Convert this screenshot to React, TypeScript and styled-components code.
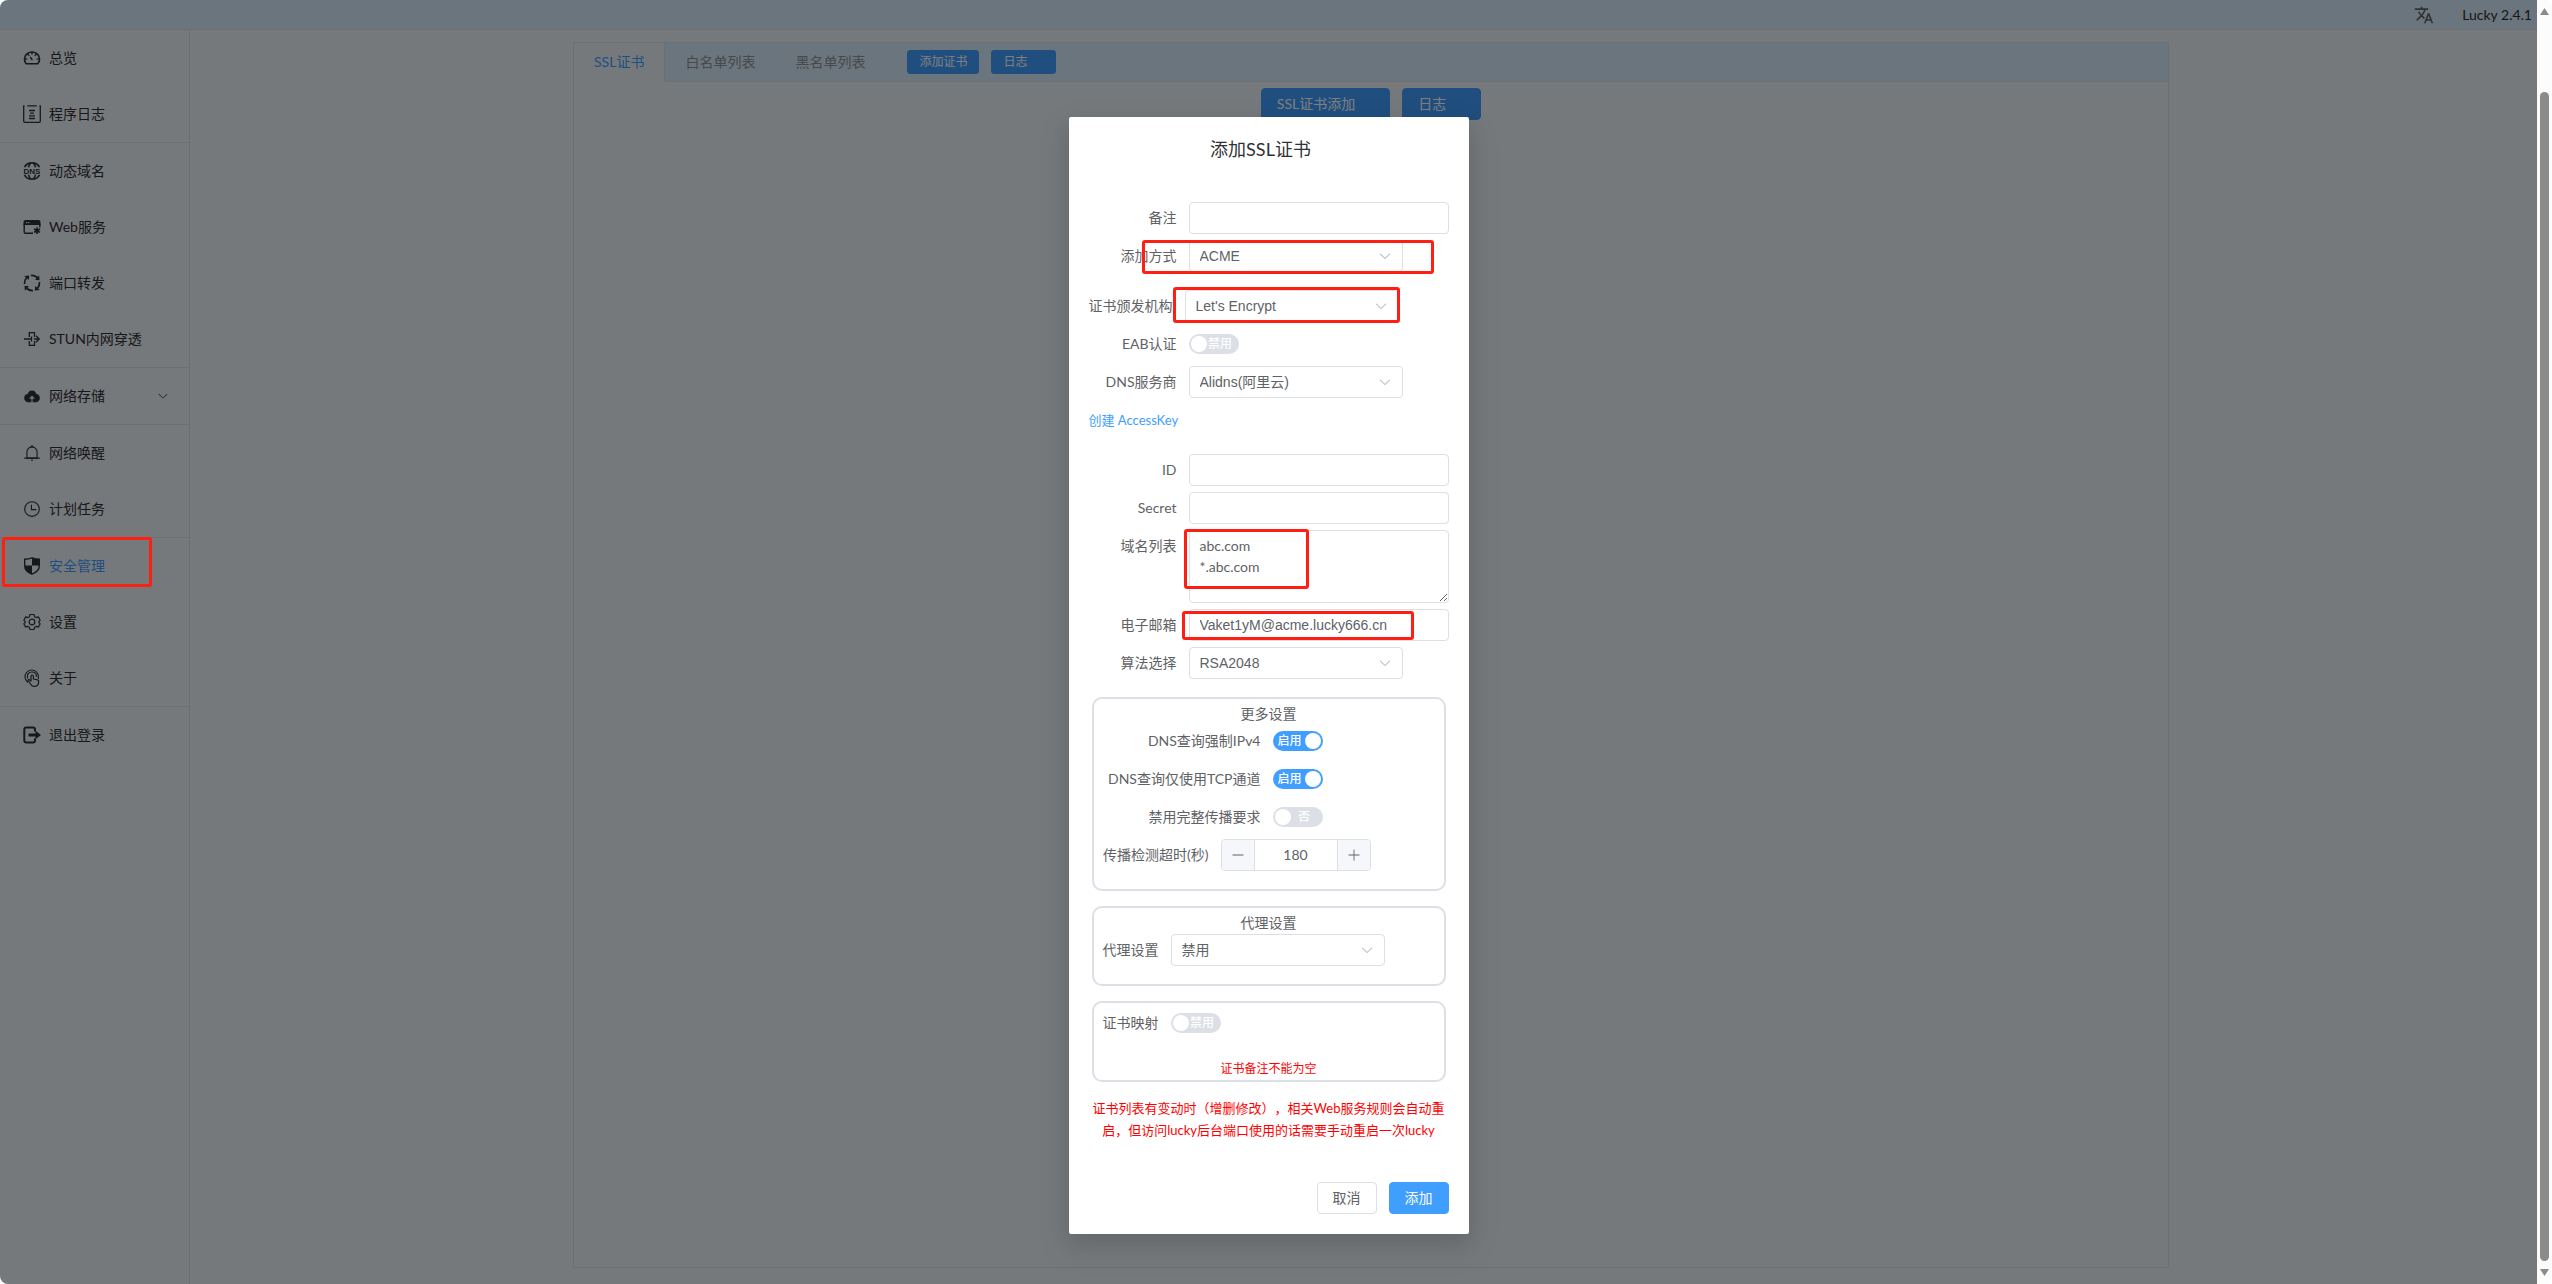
import React, { ReactNode, useState } from "react";
import styled, { createGlobalStyle, css } from "styled-components";
import { MdTranslate } from "react-icons/md";

const uiFont = `Lato, "Noto Sans CJK SC", sans-serif`;
const fieldFont = `"Liberation Sans", "Noto Sans CJK SC", sans-serif`;

const GlobalStyle = createGlobalStyle`
  *, *::before, *::after { box-sizing: border-box; }
  html, body { margin: 0; background: #fff; }
  body {
    font-family: ${uiFont};
    font-size: 14px;
    line-height: 20px;
    color: #303133;
    overflow: hidden;
    text-spacing-trim: space-all;
  }
  button, input, select, textarea { font: inherit; color: inherit; margin: 0; }
`;

/* ---------- window frame ---------- */

const Frame = styled.div`
  display: flex;
  height: 100vh;
  border-radius: 8px;
  overflow: hidden;
  background: #fcfcfc;
`;

const Viewport = styled.div`
  position: relative;
  flex: 1;
  min-width: 0;
  display: flex;
  flex-direction: column;
  background: #ecf2f9;
`;

const ScrollRail = styled.div`
  width: 15px;
  display: flex;
  flex-direction: column;
  align-items: center;
  padding: 8px 0;
`;

const ScrollThumb = styled.div`
  width: 9px;
  flex: 1;
  margin: 77px 0 8px;
  border-radius: 5px;
  background: #8b8b8b;
`;

const ScrollArrow = styled.svg`
  display: block;
  width: 9px;
  height: 7px;
  fill: #8b8b8b;
`;

/* ---------- page chrome ---------- */

const TopBar = styled.header`
  height: 30px;
  display: flex;
  align-items: center;
  justify-content: flex-end;
  gap: 28px;
  padding-right: 5px;
  border-bottom: 1px solid #dcdfe6;
  background: #d6eafa;
`;

const LanguageButton = styled.button`
  display: flex;
  padding: 0;
  border: 0;
  background: none;
  color: #606266;
  font-size: 20px;
`;

const Body = styled.div`
  flex: 1;
  display: flex;
  min-height: 0;
`;

const Sidebar = styled.nav`
  width: 190px;
  border-right: 1px solid #dcdfe6;
`;

const MenuGroup = styled.ul`
  list-style: none;
  margin: 0;
  padding: 0;
  & + & {
    border-top: 1px solid #dcdfe6;
  }
`;

const MenuLink = styled.a<{ $active?: boolean }>`
  display: flex;
  align-items: center;
  gap: 5px;
  height: 56px;
  padding: 0 20px;
  color: ${(p) => (p.$active ? "#409eff" : "#303133")};
  text-decoration: none;
`;

const MenuIcon = styled.span`
  width: 24px;
  display: flex;
  justify-content: center;
  color: #303133;
`;

const MenuText = styled.span`
  flex: 1;
`;

const Glyph = styled.svg<{ $size: number }>`
  display: block;
  flex: none;
  width: ${(p) => p.$size}px;
  height: ${(p) => p.$size}px;
`;

const Main = styled.main`
  flex: 1;
  display: flex;
  padding: 12px 368px 16px 383px;
`;

const Card = styled.section`
  flex: 1;
  border: 1px solid #dcdfe6;
`;

const TabBar = styled.div`
  display: flex;
  align-items: center;
  height: 39px;
  border-bottom: 1px solid #dcdfe6;
  background: #d6eafa;
`;

const Tab = styled.button<{ $active?: boolean }>`
  height: 39px;
  padding: 0 20px;
  border: 0;
  background: none;
  color: #909399;
  ${(p) =>
    p.$active &&
    css`
      color: #409eff;
      background: #ecf2f9;
      border-right: 1px solid #dcdfe6;
    `}
`;

const TabActions = styled.div`
  display: flex;
  gap: 12px;
  margin-left: 22px;
`;

const CardActions = styled.div`
  display: flex;
  justify-content: center;
  gap: 12px;
  padding-top: 6px;
`;

const Button = styled.button<{ $small?: boolean; $plain?: boolean; $spare?: boolean }>`
  height: ${(p) => (p.$small ? 24 : 32)}px;
  padding: 0 ${(p) => (p.$small ? 11 : 15)}px;
  padding-right: ${(p) => (p.$spare ? (p.$small ? 28 : 34) : p.$small ? 11 : 15)}px;
  border: 1px solid ${(p) => (p.$plain ? "#dcdfe6" : "#409eff")};
  border-radius: ${(p) => (p.$small ? 3 : 4)}px;
  background: ${(p) => (p.$plain ? "#fff" : "#409eff")};
  color: ${(p) => (p.$plain ? "#606266" : "#fff")};
  font-size: ${(p) => (p.$small ? 12 : 14)}px;
  line-height: 1;
`;

/* ---------- dialog ---------- */

const Overlay = styled.div`
  position: absolute;
  inset: 0;
  display: flex;
  justify-content: center;
  align-items: flex-start;
  padding-top: 117px;
  background: rgba(0, 0, 0, 0.5);
`;

const Dialog = styled.form`
  width: 400px;
  border-radius: 2px;
  background: #fff;
  color: #606266;
  box-shadow: 0 12px 32px 4px rgba(0, 0, 0, 0.08), 0 8px 20px rgba(0, 0, 0, 0.08);
`;

const DialogTitle = styled.h2`
  margin: 0 16px 0 0;
  padding: 20px 20px 10px;
  font-size: 18px;
  font-weight: 400;
  line-height: 25px;
  text-align: center;
  color: #303133;
`;

const DialogBody = styled.div`
  display: flex;
  flex-direction: column;
  padding: 30px 20px 31px;
`;

const DialogFooter = styled.div`
  display: flex;
  justify-content: flex-end;
  gap: 12px;
  padding: 10px 20px 20px;
`;

const Row = styled.div<{ $gap?: number }>`
  position: relative;
  display: flex;
  align-items: center;
  gap: 12px;
  min-height: 32px;
  margin-bottom: ${(p) => p.$gap ?? 6}px;
`;

const Label = styled.label<{ $width: number; $top?: boolean }>`
  flex: none;
  width: ${(p) => p.$width}px;
  line-height: 32px;
  text-align: right;
  white-space: nowrap;
  ${(p) => p.$top && "align-self: flex-start;"}
`;

const fieldBox = css`
  border: 1px solid #dcdfe6;
  border-radius: 4px;
  background: #fff;
  outline: none;
`;

const TextInput = styled.input`
  ${fieldBox}
  flex: 1;
  min-width: 0;
  height: 32px;
  padding: 0 10px;
  font-family: ${fieldFont};
`;

const TextArea = styled.textarea`
  ${fieldBox}
  flex: 1;
  min-width: 0;
  height: 73px;
  padding: 4px 10px;
  line-height: 21px;
  resize: vertical;
`;

const SelectBox = styled.span`
  position: relative;
  flex: none;
  width: 214px;
  svg {
    position: absolute;
    top: 9px;
    right: 11px;
    color: #a8abb2;
    pointer-events: none;
  }
`;

const NativeSelect = styled.select`
  ${fieldBox}
  display: block;
  width: 100%;
  height: 32px;
  padding: 0 30px 0 10px;
  appearance: none;
  font-family: ${fieldFont};
`;

const HelpLink = styled.a`
  width: 88px;
  font-size: 13px;
  text-align: right;
  white-space: nowrap;
  color: #409eff;
  text-decoration: none;
`;

const SwitchTrack = styled.span<{ $on: boolean }>`
  position: relative;
  display: flex;
  flex-direction: ${(p) => (p.$on ? "row" : "row-reverse")};
  align-items: center;
  width: 50px;
  height: 20px;
  padding: 0 2px;
  border-radius: 10px;
  background: ${(p) => (p.$on ? "#409eff" : "#dcdfe6")};
`;

const SwitchInput = styled.input`
  position: absolute;
  inset: 0;
  width: 100%;
  height: 100%;
  opacity: 0;
`;

const SwitchText = styled.span<{ $on: boolean }>`
  flex: 1;
  padding-right: ${(p) => (p.$on ? 0 : 3)}px;
  font-size: 12px;
  font-weight: 500;
  line-height: 20px;
  text-align: center;
  color: #fff;
`;

const SwitchKnob = styled.span`
  width: 16px;
  height: 16px;
  border-radius: 50%;
  background: #fff;
`;

const Panel = styled.fieldset`
  min-width: 0;
  margin: 0 3px 15px;
  padding: 4px 8px 0;
  border: 2px solid #dcdfe6;
  border-radius: 10px;
`;

const PanelTitle = styled.div`
  line-height: 22px;
  text-align: center;
`;

const Warning = styled.p`
  margin: 0;
  font-size: 12px;
  line-height: 23px;
  text-align: center;
  color: #f00;
`;

const Hint = styled.p`
  margin: 0 3px;
  font-size: 13px;
  line-height: 22px;
  text-align: center;
  color: #f00;
`;

const Stepper = styled.div`
  ${fieldBox}
  display: flex;
  width: 150px;
  height: 32px;
  overflow: hidden;
`;

const StepButton = styled.button`
  display: flex;
  align-items: center;
  justify-content: center;
  width: 32px;
  padding: 0;
  border: 0;
  background: #f5f7fa;
  color: #606266;
`;

const StepValue = styled.input`
  flex: 1;
  min-width: 0;
  padding: 0;
  border: solid #dcdfe6;
  border-width: 0 1px;
  text-align: center;
  outline: none;
`;

/* red frame laid over the item it points out */
const Mark = styled.span<{ $x: number; $y: number; $w: number; $h: number }>`
  position: absolute;
  left: ${(p) => p.$x}px;
  top: ${(p) => p.$y}px;
  width: ${(p) => p.$w}px;
  height: ${(p) => p.$h}px;
  border: 3px solid #ff1f12;
  border-radius: 3px;
  pointer-events: none;
`;

const MarkLayer = styled.div`
  position: absolute;
  inset: 0;
  pointer-events: none;
`;

/* ---------- icons ---------- */

const stroke = { fill: "none", stroke: "currentColor", strokeWidth: 1.4 } as const;

const small = (children: ReactNode) => (
  <Glyph $size={18} viewBox="0 0 18 18" aria-hidden="true">
    {children}
  </Glyph>
);

const element = (paths: string[], size = 18) => (
  <Glyph $size={size} viewBox="0 0 1024 1024" fill="currentColor" aria-hidden="true">
    {paths.map((d) => (
      <path key={d} d={d} />
    ))}
  </Glyph>
);

const chevron = (size: number) =>
  element(
    [
      "M831.872 340.864 512 652.672 192.128 340.864a30.592 30.592 0 0 0-42.752 0 29.12 29.12 0 0 0 0 41.6L489.664 714.24a32 32 0 0 0 44.672 0l340.288-331.712a29.12 29.12 0 0 0 0-41.728 30.592 30.592 0 0 0-42.752 0z",
    ],
    size
  );

const icons = {
  gauge: small(
    <g {...stroke}>
      <path d="M3.2 14.8C.8 12.2 1 8.2 3.2 5.6 6.1 2.100 11.900 2.100 14.800 5.600 17 8.200 17.200 12.200 14.800 14.800Z" strokeWidth={1.6} />
      <path d="M9 3.100v2.500M4.600 5.100l1.600 1.600M13.400 5.100l-1.600 1.600M1.800 10.100h2.600M13.600 10.100h2.600M9.400 11.100 7.200 8" />
    </g>
  ),
  log: small(
    <path
      {...stroke}
      strokeWidth={1.3}
      d="M1.600.9H.7v15.200q0 1.200 1.200 1.200h14.200q1.200 0 1.200-1.200V.9h-.9M4.300.8h9.400M6 5.500h6M7 8.200h4M6 10.800h6M6 13.500h6"
    />
  ),
  dns: small(
    <>
      <path {...stroke} strokeWidth={1.7} d="M1.500 5.200C4.300-.6 13.700-.6 16.500 5.200M1.500 12.800C4.300 18.600 13.700 18.600 16.500 12.800" />
      <path {...stroke} strokeWidth={1.5} d="M5.500 5.300Q6 3 7.500 1.300M12.500 5.300Q12 3 10.500 1.300M5.500 12.700Q6 15 7.500 16.700M12.500 12.700Q12 15 10.500 16.700" />
      <text x="9" y="11.500" textAnchor="middle" fontSize="8" fontWeight="700" fontFamily="Liberation Sans, sans-serif" fill="currentColor">
        DNS
      </text>
    </>
  ),
  web: small(
    <>
      <path fill="currentColor" fillRule="evenodd" d="M2.500 2h13q2 0 2 2v3H.5V4q0-2 2-2ZM3 4v1.200h1.200V4ZM5.200 4v1.200h1.200V4Z" />
      <path {...stroke} d="M1.200 6v8q0 1.300 1.300 1.300H10M16.800 6v3.500" />
      <path {...stroke} strokeWidth={1.6} d="M14 9.300v6.800M11 11l6 3.400M17 11l-6 3.400" />
      <circle cx="14" cy="12.700" r="2" fill="currentColor" />
    </>
  ),
  cycle: small(
    <>
      <path {...stroke} strokeWidth={1.7} d="M1.500 10Q1.200 6.500 3.500 3.800M8 1.500Q11.500 1.200 14.200 3.500M16.500 8Q16.800 11.500 14.500 14.200M10 16.500Q6.500 16.800 3.800 14.500" />
      <path fill="currentColor" d="M1.200 1.900 6.200 1.500 5.800 6ZM16.100 1.200l.4 5-4.500-.4ZM16.800 16.100l-5 .4.400-4.500ZM1.900 16.800l-.4-5 4.500.4Z" />
    </>
  ),
  stun: small(
    <path {...stroke} strokeWidth={1.3} d="M1 9h7M6.300 7V2.700h5.200V7M6.300 11v4.300h5.200V11M8.500 6.500v5M11 9h5M13 5.800 16.200 9 13 12.200" />
  ),
  cloud: element([
    "M544 864V672h128L512 480 352 672h128v192H320v-1.600c-5.376.320-10.496 1.600-16 1.600A240 240 0 0 1 64 624c0-123.136 93.120-223.488 212.608-237.248A239.808 239.808 0 0 1 512 192a239.872 239.872 0 0 1 235.456 194.752c119.488 13.760 212.480 114.112 212.480 237.248a240 240 0 0 1-240 240c-5.376 0-10.560-1.280-16-1.600v1.600H544z",
  ]),
  bell: element([
    "M512 64a64 64 0 0 1 64 64v64H448v-64a64 64 0 0 1 64-64z",
    "M256 768h512V448a256 256 0 1 0-512 0v320zm256-640a320 320 0 0 1 320 320v384H192V448a320 320 0 0 1 320-320z",
    "M96 768h832q32 0 32 32t-32 32H96q-32 0-32-32t32-32zm352 128h128a64 64 0 0 1-128 0z",
  ]),
  clock: element([
    "M512 896a384 384 0 1 0 0-768 384 384 0 0 0 0 768zm0 64a448 448 0 1 1 0-896 448 448 0 0 1 0 896z",
    "M480 256a32 32 0 0 1 32 32v256a32 32 0 0 1-64 0V288a32 32 0 0 1 32-32z",
    "M480 512h256q32 0 32 32t-32 32H480q-32 0-32-32t32-32z",
  ]),
  shield: small(
    <>
      <path {...stroke} d="M9 .9Q12.500 2.200 16.300 2.300V8.500Q16.300 14.500 9 17.200 1.700 14.500 1.700 8.500V2.300Q5.500 2.200 9 .9Z" />
      <path fill="currentColor" d="M9 .5Q12.500 2 16.500 2V8.500H9ZM1.500 8.500H9V17.500Q1.800 14.500 1.500 8.500Z" />
    </>
  ),
  gear: small(
    <g {...stroke} strokeWidth={1.2} strokeLinejoin="round">
      <path d="M7 1.500h4l.6 2.200 1.500.9 2.200-.7 1.900 3.300-1.600 1.600v.4l1.600 1.600-1.900 3.300-2.200-.7-1.500.9-.6 2.200H7l-.6-2.200-1.500-.9-2.200.7L.8 10.800l1.600-1.600v-.4L.8 7.200l1.900-3.300 2.200.7 1.500-.9Z" />
      <circle cx="9" cy="9" r="2.800" />
    </g>
  ),
  touch: small(
    <g {...stroke} strokeWidth={1.2} strokeLinecap="round" strokeLinejoin="round">
      <path d="M4.500 13C1.500 10.500 1.200 6.500 3.500 3.500 6 .3 11.500 0 14 3.500 15.500 5.500 15.800 7.500 15.400 9.500" />
      <path d="M4.500 9C3.500 5.500 6 3 9 3 11.500 3 13.300 4.800 13.500 7.200" />
      <path d="M8 12V7.500Q8 6 9.200 6T10.400 7.500V10L14.500 10.800Q15.800 11.200 15.700 12.500 15.500 17.300 12 17.300H10.500Q9 17.300 7.500 15L4.800 11.200Q5.500 9.800 8 12" />
    </g>
  ),
  exit: small(
    <>
      <path {...stroke} strokeWidth={2} d="M12 5.500V3.500Q12 1.500 10 1.500H3.300Q1.300 1.500 1.300 3.500V14.500Q1.300 16.500 3.300 16.500H10Q12 16.500 12 14.500V12.500" />
      <path fill="currentColor" d="M5.500 7.600h7V4.800L18 9l-5.500 4.200v-2.800H5.500Z" />
    </>
  ),
};

/* ---------- pieces ---------- */

const menu: { icon: keyof typeof icons; text: string; active?: boolean; more?: boolean }[][] = [
  [
    { icon: "gauge", text: "总览" },
    { icon: "log", text: "程序日志" },
  ],
  [
    { icon: "dns", text: "动态域名" },
    { icon: "web", text: "Web服务" },
    { icon: "cycle", text: "端口转发" },
    { icon: "stun", text: "STUN内网穿透" },
  ],
  [{ icon: "cloud", text: "网络存储", more: true }],
  [
    { icon: "bell", text: "网络唤醒" },
    { icon: "clock", text: "计划任务" },
  ],
  [
    { icon: "shield", text: "安全管理", active: true },
    { icon: "gear", text: "设置" },
    { icon: "touch", text: "关于" },
  ],
  [{ icon: "exit", text: "退出登录" }],
];

function Switch({ id, initial = false, on, off }: { id: string; initial?: boolean; on: string; off: string }) {
  const [checked, setChecked] = useState(initial);
  return (
    <SwitchTrack $on={checked}>
      <SwitchText $on={checked}>{checked ? on : off}</SwitchText>
      <SwitchKnob />
      <SwitchInput id={id} type="checkbox" role="switch" checked={checked} onChange={(e) => setChecked(e.target.checked)} />
    </SwitchTrack>
  );
}

function Select({ id, options }: { id: string; options: string[] }) {
  return (
    <SelectBox>
      <NativeSelect id={id}>
        {options.map((o) => (
          <option key={o}>{o}</option>
        ))}
      </NativeSelect>
      {chevron(14)}
    </SelectBox>
  );
}

function NumberStepper({ id }: { id: string }) {
  const [value, setValue] = useState(180);
  return (
    <Stepper>
      <StepButton type="button" aria-label="减少" onClick={() => setValue(value - 1)}>
        {element(["M128 544h768a32 32 0 1 0 0-64H128a32 32 0 0 0 0 64z"], 14)}
      </StepButton>
      <StepValue id={id} value={value} onChange={(e) => setValue(Number(e.target.value) || 0)} />
      <StepButton type="button" aria-label="增加" onClick={() => setValue(value + 1)}>
        {element(
          [
            "M480 480V128a32 32 0 0 1 64 0v352h352a32 32 0 1 1 0 64H544v352a32 32 0 1 1-64 0V544H128a32 32 0 0 1 0-64z",
          ],
          14
        )}
      </StepButton>
    </Stepper>
  );
}

function CertificateDialog() {
  return (
    <Dialog role="dialog" aria-labelledby="dialog-title" onSubmit={(e) => e.preventDefault()}>
      <DialogTitle id="dialog-title">添加SSL证书</DialogTitle>
      <DialogBody>
        <Row>
          <Label $width={88} htmlFor="remark">备注</Label>
          <TextInput id="remark" />
        </Row>
        <Row $gap={18}>
          <Label $width={88} htmlFor="method">添加方式</Label>
          <Select id="method" options={["ACME"]} />
          <Mark $x={53} $y={0} $w={292} $h={34} />
        </Row>
        <Row>
          <Label $width={84} htmlFor="issuer">证书颁发机构</Label>
          <Select id="issuer" options={["Let's Encrypt"]} />
          <Mark $x={84} $y={-3} $w={227} $h={36} />
        </Row>
        <Row>
          <Label $width={88} htmlFor="eab">EAB认证</Label>
          <Switch id="eab" on="启用" off="禁用" />
        </Row>
        <Row>
          <Label $width={88} htmlFor="dns">DNS服务商</Label>
          <Select id="dns" options={["Alidns(阿里云)"]} />
        </Row>
        <Row $gap={18}>
          <HelpLink href="#">创建 AccessKey</HelpLink>
        </Row>
        <Row>
          <Label $width={88} htmlFor="key-id">ID</Label>
          <TextInput id="key-id" />
        </Row>
        <Row>
          <Label $width={88} htmlFor="secret">Secret</Label>
          <TextInput id="secret" />
        </Row>
        <Row>
          <Label $width={88} $top htmlFor="domains">域名列表</Label>
          <TextArea id="domains" defaultValue={"abc.com\n*.abc.com"} />
          <Mark $x={95} $y={-1} $w={125} $h={60} />
        </Row>
        <Row>
          <Label $width={88} htmlFor="email">电子邮箱</Label>
          <TextInput id="email" defaultValue="Vaket1yM@acme.lucky666.cn" />
          <Mark $x={93} $y={2} $w={232} $h={29} />
        </Row>
        <Row $gap={18}>
          <Label $width={88} htmlFor="algorithm">算法选择</Label>
          <Select id="algorithm" options={["RSA2048"]} />
        </Row>

        <Panel aria-label="更多设置">
          <PanelTitle>更多设置</PanelTitle>
          <Row>
            <Label $width={159} htmlFor="ipv4">DNS查询强制IPv4</Label>
            <Switch id="ipv4" initial on="启用" off="禁用" />
          </Row>
          <Row>
            <Label $width={159} htmlFor="tcp">DNS查询仅使用TCP通道</Label>
            <Switch id="tcp" initial on="启用" off="禁用" />
          </Row>
          <Row>
            <Label $width={159} htmlFor="propagation">禁用完整传播要求</Label>
            <Switch id="propagation" on="是" off="否" />
          </Row>
          <Row $gap={18}>
            <Label $width={107} htmlFor="timeout">传播检测超时(秒)</Label>
            <NumberStepper id="timeout" />
          </Row>
        </Panel>

        <Panel aria-label="代理设置">
          <PanelTitle>代理设置</PanelTitle>
          <Row $gap={18}>
            <Label $width={57} htmlFor="proxy">代理设置</Label>
            <Select id="proxy" options={["禁用"]} />
          </Row>
        </Panel>

        <Panel aria-label="证书映射">
          <Row $gap={18}>
            <Label $width={57} htmlFor="mapping">证书映射</Label>
            <Switch id="mapping" on="启用" off="禁用" />
          </Row>
          <Warning>证书备注不能为空</Warning>
        </Panel>

        <Hint>证书列表有变动时（增删修改），相关Web服务规则会自动重启，但访问lucky后台端口使用的话需要手动重启一次lucky</Hint>
      </DialogBody>
      <DialogFooter>
        <Button type="button" $plain>取消</Button>
        <Button type="submit">添加</Button>
      </DialogFooter>
    </Dialog>
  );
}

export default function App() {
  return (
    <>
      <GlobalStyle />
      <Frame>
        <Viewport>
          <TopBar>
            <LanguageButton aria-label="切换语言">
              <MdTranslate />
            </LanguageButton>
            <span>Lucky 2.4.1</span>
          </TopBar>
          <Body>
            <Sidebar>
              {menu.map((group, i) => (
                <MenuGroup key={i}>
                  {group.map((item) => (
                    <li key={item.text}>
                      <MenuLink href="#" $active={item.active}>
                        <MenuIcon>{icons[item.icon]}</MenuIcon>
                        <MenuText>{item.text}</MenuText>
                        {item.more && chevron(12)}
                      </MenuLink>
                    </li>
                  ))}
                </MenuGroup>
              ))}
            </Sidebar>
            <Main>
              <Card>
                <TabBar>
                  <Tab $active>SSL证书</Tab>
                  <Tab>白名单列表</Tab>
                  <Tab>黑名单列表</Tab>
                  <TabActions>
                    <Button $small>添加证书</Button>
                    <Button $small $spare>日志</Button>
                  </TabActions>
                </TabBar>
                <CardActions>
                  <Button $spare>SSL证书添加</Button>
                  <Button $spare>日志</Button>
                </CardActions>
              </Card>
            </Main>
          </Body>
          <Overlay>
            <CertificateDialog />
          </Overlay>
          <MarkLayer>
            <Mark $x={2} $y={537} $w={150} $h={50} />
          </MarkLayer>
        </Viewport>
        <ScrollRail aria-hidden="true">
          <ScrollArrow viewBox="0 0 9 7"><path d="M4.500 0 9 7H0Z" /></ScrollArrow>
          <ScrollThumb />
          <ScrollArrow viewBox="0 0 9 7"><path d="M4.500 7 9 0H0Z" /></ScrollArrow>
        </ScrollRail>
      </Frame>
    </>
  );
}
